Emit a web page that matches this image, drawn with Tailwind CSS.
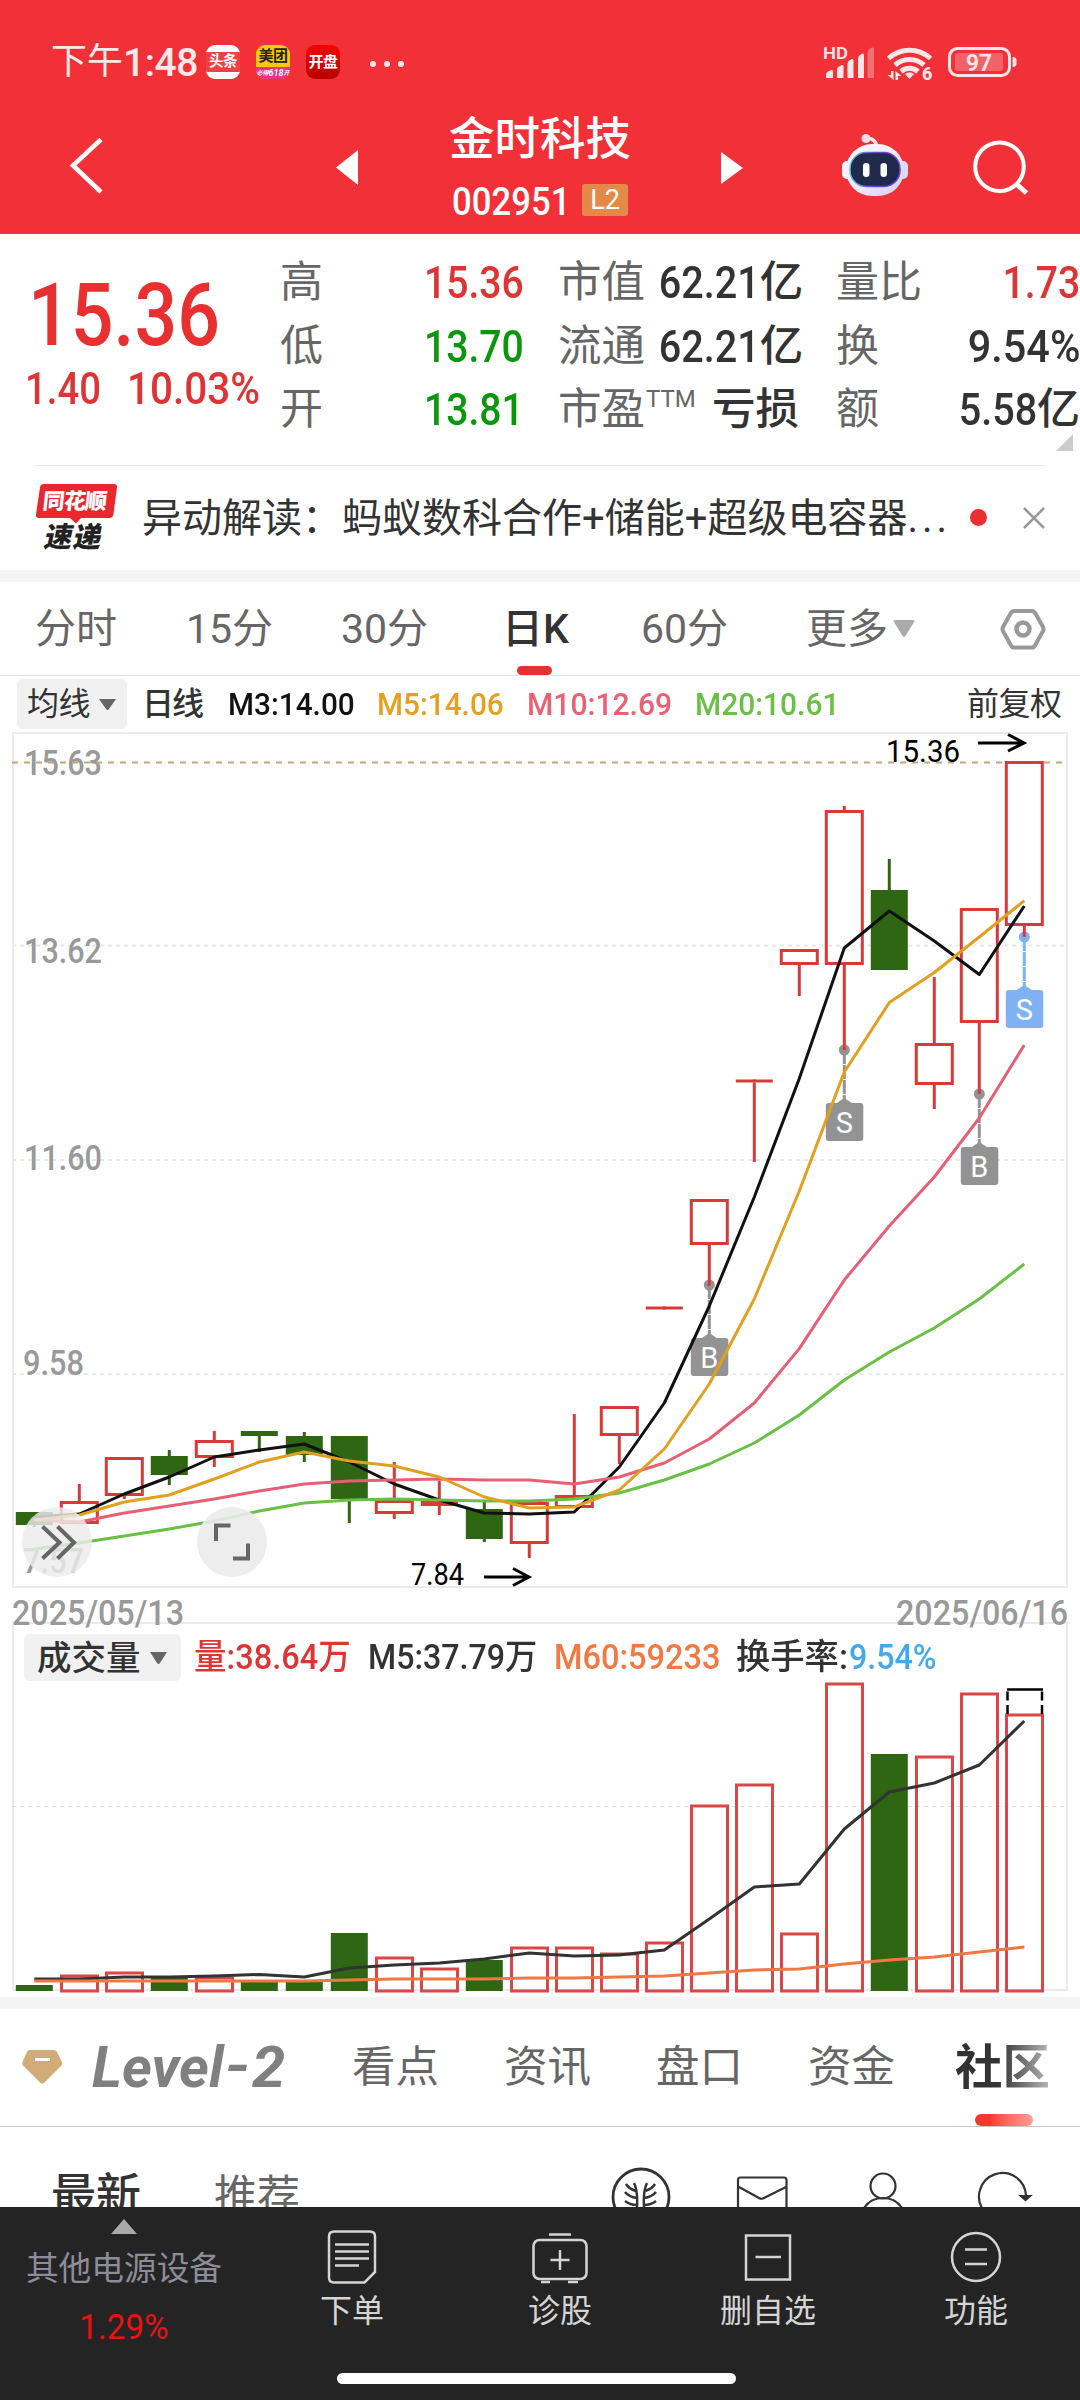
<!DOCTYPE html>
<html lang="zh-CN">
<head>
<meta charset="utf-8">
<title>金时科技 002951</title>
<script src="https://cdn.jsdelivr.net/npm/@tailwindcss/browser@4"></script>
</head>
<body class="w-[1080px] h-[2400px] overflow-hidden bg-white font-['Roboto','Noto_Sans_CJK_SC',sans-serif] text-[#333] whitespace-nowrap">

<!-- Header -->
<header class="h-[234px] bg-[#f23038] text-white flex flex-col">
  <div class="h-[124px] pt-[42px] pl-[51px] flex items-start">
    <div class="w-[155px] h-[40px] flex items-center text-white/90"><span class="text-[36px] leading-[40px]">下午</span><span class="text-[39px] leading-[40px] font-medium tracking-[-0.5px] translate-y-[1px]">1:48</span></div>
    <div class="mt-[3px] w-[34px] h-[34px] rounded-[9px] bg-white overflow-hidden flex items-center"><div class="w-full h-[20px] bg-[#f04142] text-[14.500px] leading-[19px] font-bold text-center tracking-[-0.5px]">头条</div></div>
    <div class="mt-[3px] ml-[16px] w-[34px] h-[34px] rounded-[9px] bg-[#fdca0a] overflow-hidden text-center flex flex-col"><div class="h-[22px] pt-[3px] text-[15px] leading-[17px] font-bold text-[#222] tracking-[-0.5px]">美团</div><div class="h-[12px] bg-[#f0308c] text-[6px] leading-[12px] font-bold italic flex justify-center items-center"><span>必得</span><span class="text-[9px]">618</span><span>开</span></div></div>
    <div class="mt-[3px] ml-[16px] w-[34px] h-[34px] rounded-[9px] bg-linear-to-b from-[#f80000] to-[#b80000] text-[15px] leading-[34px] font-bold text-center tracking-[-0.5px]">开盘</div>
    <div class="ml-[30px] mt-[19px] flex gap-[8px]"><i class="size-[6px] rounded-full bg-white/90"></i><i class="size-[6px] rounded-full bg-white/90"></i><i class="size-[6px] rounded-full bg-white/90"></i></div>
    <svg class="ml-[419px] -mt-[2px] w-[200px] h-[44px] shrink-0" viewBox="823 40 200 44" fill="#fde6e7">
      <text x="823" y="58.500" font-size="16.500" font-weight="600" textLength="25" lengthAdjust="spacingAndGlyphs">HD</text>
      <path d="M826 78v-3q0-3 3-4l2-.8q2-.5 2 1.500V78zM837 78V70q0-3 3-4l2-1q1.500-.5 1.500 1.500V78zM847.500 78V64q0-3 2.500-4l2-1q1.500-.5 1.500 1.500V78zM858 78V59q0-3 2.500-4.500l2-1q1.500-.5 1.500 1.500V78z"/>
      <path opacity=".35" d="M867.500 78V53q0-3 2.500-4.500l2-1q2-.5 2 1.500V78z"/>
      <g fill="none" stroke="#fde6e7" stroke-width="5"><path d="M888.500 58.500a31 31 0 0 1 42 0"/><path d="M895 65a22 22 0 0 1 29 0"/><path d="M901 71.500a13 13 0 0 1 17 0"/></g>
      <path d="M905 74q4.500-3.500 9 0l-4.500 5z"/>
      <path d="M891 71h2.500v9l-6-5h3.500zM895.500 80v-9l6 5h-3.500v4z"/>
      <text x="922" y="80" font-size="18" font-weight="800">6</text>
      <rect x="949.500" y="48.500" width="60" height="27" rx="8" fill="none" stroke="#fde6e7" stroke-width="3"/>
      <rect x="955" y="53" width="48" height="18" rx="3" opacity=".28"/>
      <path d="M1012.500 57q4 0 4 3v4q0 3-4 3z"/>
      <text x="966" y="71" font-size="24" font-weight="600" textLength="26" lengthAdjust="spacingAndGlyphs">97</text>
    </svg>
  </div>
  <div class="h-[110px] flex items-start">
    <svg class="w-[450px] h-[80px]" viewBox="0 124 450 80"><path d="M101 139.500 73 165.500 101 192" fill="none" stroke="#fff" stroke-width="4.500"/><path d="M336 167.500 358 150v35z" fill="#fff"/></svg>
    <div class="w-[180px] -mt-[11px] flex flex-col items-center">
      <h1 class="text-[45.500px] leading-[54px] font-medium">金时科技</h1>
      <div class="mt-[16px] h-[34px] w-[180px] pl-[2px] flex items-center"><span class="w-[130px] text-[39px] leading-[34px] font-medium inline-block origin-left scale-x-[.89] translate-y-[2px]">002951</span><span class="w-[46px] h-[32px] bg-[#e48a49] rounded-[3px] text-[27px] leading-[33px] text-center">L2</span></div>
    </div>
    <svg class="w-[450px] h-[80px]" viewBox="630 124 450 80">
      <defs><linearGradient id="shell" x1="0" y1="0" x2="1" y2="1"><stop offset="0" stop-color="#fff"/><stop offset=".6" stop-color="#e9e6fb"/><stop offset="1" stop-color="#cdd0f5"/></linearGradient><linearGradient id="rim" x1="0" x2="1"><stop offset="0" stop-color="#62c6d8"/><stop offset=".5" stop-color="#6a3fd0"/><stop offset="1" stop-color="#7a40d8"/></linearGradient></defs>
      <path d="M743 168 721 152v32z" fill="#fff"/>
      <path d="M866 138.500q9-1 10.500 7" fill="none" stroke="#f6e4ee" stroke-width="3.500"/><circle cx="866" cy="138.500" r="4.500" fill="#f6dfea"/>
      <rect x="842" y="161" width="14" height="18" rx="5" fill="#f4f3ff"/><rect x="894" y="161" width="14" height="18" rx="5" fill="#d9dcfa"/>
      <rect x="846" y="144" width="58" height="52" rx="26" fill="url(#shell)"/>
      <rect x="850" y="152.500" width="50" height="34" rx="16" fill="#1f2a4c" stroke="url(#rim)" stroke-width="1.500"/>
      <rect x="863" y="163" width="6.500" height="14" rx="3.200" fill="#fff"/><rect x="880.500" y="163" width="6.500" height="14" rx="3.200" fill="#fff"/>
      <circle cx="999.500" cy="166.700" r="24.300" fill="none" stroke="#fff" stroke-width="4"/><path d="M1017 184.500 1026.500 193" stroke="#fff" stroke-width="5"/>
    </svg>
  </div>
</header>

<!-- Quote -->
<section class="relative h-[231px] flex">
  <div class="w-[280px] text-[#e83030] font-medium">
    <div class="mt-[41px] pl-[28px] h-[80px]"><span class="inline-block origin-left scale-x-[.865] text-[87px] leading-[80px]">15.36</span></div>
    <div class="mt-[9px] pl-[25px] flex h-[50px] text-[44px] leading-[50px] text-[#dd3535]"><span class="w-[102px] origin-left scale-x-[.87]">1.40</span><span class="w-[140px] origin-left scale-x-[.92]">10.03%</span></div>
  </div>
  <div class="w-[244px] pt-[17px] text-[43px] leading-[63.500px] text-[#666]">
    <div class="flex justify-between"><span>高</span><span class="text-[45px] font-medium text-[#dd3535] origin-right scale-x-[.87]">15.36</span></div>
    <div class="flex justify-between"><span>低</span><span class="text-[45px] font-medium text-[#0b960b] origin-right scale-x-[.87]">13.70</span></div>
    <div class="flex justify-between"><span>开</span><span class="text-[45px] font-medium text-[#0b960b] origin-right scale-x-[.87]">13.81</span></div>
  </div>
  <div class="w-[241px] ml-[34px] pt-[17px] text-[43.500px] leading-[63.500px] text-[#666]">
    <div class="flex justify-between"><span>市值</span><span class="flex font-medium text-[#333]"><span class="text-[45px] origin-right scale-x-[.88]">62.21</span>亿</span></div>
    <div class="flex justify-between"><span>流通</span><span class="flex font-medium text-[#333]"><span class="text-[45px] origin-right scale-x-[.88]">62.21</span>亿</span></div>
    <div class="flex justify-between"><span class="flex">市盈<span class="text-[24px] leading-[42px] ml-[1px]">TTM</span></span><span class="font-medium text-[#333]">亏损</span></div>
  </div>
  <div class="w-[244px] ml-[37px] pt-[17px] text-[43px] leading-[63.500px] text-[#666]">
    <div class="flex justify-between"><span>量比</span><span class="text-[45px] font-medium text-[#dd3535] origin-right scale-x-[.87]">1.73</span></div>
    <div class="flex justify-between"><span>换</span><span class="text-[45px] font-medium text-[#333] origin-right scale-x-[.92]">9.54%</span></div>
    <div class="flex justify-between"><span>额</span><span class="flex font-medium text-[#333]"><span class="text-[45px] origin-right scale-x-[.88]">5.58</span>亿</span></div>
  </div>
  <svg class="absolute left-[1056px] top-[200px] w-[17px] h-[17px]" viewBox="0 0 17 17"><path d="M17 0v17H0z" fill="#ccc"/></svg>
</section>

<!-- News strip -->
<section class="h-[105px] mx-[35px] border-t border-[#e8e8e8] flex items-start">
  <div class="relative w-[84px] h-[70px] mt-[18px]">
    <svg class="absolute inset-0 w-[84px] h-[70px]" viewBox="35 484 84 70"><path d="M43.500 484H114q3.500 0 3 3.500L113.500 514q-.5 4-4.500 4H81l-5 5.500-6-5.500H39q-3.500 0-3-3.500L40 487.500q.5-3.500 3.500-3.500z" fill="#e8282e"/></svg>
    <div class="relative pl-[8px] pt-[5px] text-[22px] leading-[25px] font-black text-white -skew-x-6 tracking-[-0.800px]">同花顺</div>
    <div class="relative pl-[10px] mt-[9px] text-[28px] leading-[30px] font-black text-[#222] -skew-x-12 tracking-[1px]">速递</div>
  </div>
  <div class="w-[807px] ml-[23px] mt-[25px] text-[40px] leading-[56px]">异动解读：蚂蚁数科合作+储能+超级电容器<span class="tracking-[4px]">...</span></div>
  <i class="ml-[21px] mt-[43px] size-[17px] rounded-full bg-[#e83030]"></i>
  <svg class="ml-[36px] mt-[41px] w-[22px] h-[22px]" viewBox="0 0 22 22"><path d="M1 1 21 21M21 1 1 21" stroke="#999" stroke-width="2.500"/></svg>
</section>
<div class="h-[12px] bg-[#f4f4f4]"></div>

<!-- Period tabs -->
<nav class="h-[94px] border-b border-[#e2e2e2] pl-[35px] flex text-[41px] leading-[94px] text-[#666]">
  <span class="w-[151px]">分时</span><span class="w-[155px]">15分</span><span class="w-[161px]">30分</span>
  <span class="w-[139px] h-[93px] relative font-medium text-[#333]">日K<i class="absolute left-[15px] bottom-0 w-[35px] h-[9px] rounded-full bg-[#e83030]"></i></span>
  <span class="w-[165px]">60分</span><span class="w-[84px]">更多</span>
  <svg class="mt-[18px] w-[160px] h-[60px]" viewBox="890 600 160 60"><path d="M895.500 620h17q3 0 1.200 2.500L905.500 636q-1.500 2-3 0L894.300 622.500Q892.500 620 895.500 620z" fill="#aaa"/><g fill="none" stroke="#999"><path d="M1014 611h18q2 0 3 1.800L1043 627q1 2 0 4l-8 14.500q-1 2-3 2h-18q-2 0-3-2L1003 631q-1-2 0-4l8-14.200q1-1.800 3-1.800z" stroke-width="4"/><circle cx="1023" cy="629" r="6.500" stroke-width="4.500"/></g></svg>
</nav>

<!-- Moving averages legend -->
<div class="h-[54px] pl-[17px] pt-[3px] flex text-[32px] leading-[50px] font-medium">
  <div class="w-[110px] h-[50px] rounded-[6px] bg-[#f1f1f1] pl-[10px] flex items-center font-normal tracking-[-0.500px]">均线<svg class="ml-[9px] w-[17px] h-[11px]" viewBox="0 0 17 11"><path d="M0 0h17L10 10q-1.500 2-3 0z" fill="#666"/></svg></div>
  <span class="w-[86px] ml-[15px] tracking-[-2px]">日线</span>
  <span class="w-[149px] text-[#111] origin-left scale-x-[.93]">M3:14.00</span>
  <span class="w-[150px] text-[#e5a020] origin-left scale-x-[.93]">M5:14.06</span>
  <span class="w-[168px] text-[#ec6075] origin-left scale-x-[.94]">M10:12.69</span>
  <span class="w-[272px] text-[#6abf45] origin-left scale-x-[.935]">M20:10.61</span>
  <span class="font-normal tracking-[-0.500px]">前复权</span>
</div>

<!-- Candlestick chart -->
<svg class="block w-[1080px] h-[860px] overflow-visible" viewBox="0 730 1080 860">
  <rect x="13" y="733" width="1054" height="854" fill="none" stroke="#ebebeb" stroke-width="2"/>
  <g stroke="#e9e9e9" stroke-width="2" stroke-dasharray="4 4"><path d="M12 945.500H1066M12 1160H1066M12 1374H1066"/></g>
  <g font-size="35" font-weight="500" fill="#999">
    <text x="24" y="774.500" textLength="78" lengthAdjust="spacingAndGlyphs">15.63</text>
    <text x="24" y="963" textLength="78" lengthAdjust="spacingAndGlyphs">13.62</text>
    <text x="24" y="1169.500" textLength="78" lengthAdjust="spacingAndGlyphs">11.60</text>
    <text x="23" y="1374.500" textLength="61" lengthAdjust="spacingAndGlyphs">9.58</text>
    <text x="23" y="1572.500" textLength="61" lengthAdjust="spacingAndGlyphs">7.57</text>
  </g>
  <path d="M12 762.500H1066" stroke="#c8a676" stroke-width="2" stroke-dasharray="6 6"/>
  <g id="tags"></g>
  <g id="candles"></g>
  <g id="lines" fill="none" stroke-width="3" stroke-linejoin="round"></g>
  <g font-size="30.500" fill="#000"><text x="886" y="762" textLength="74" lengthAdjust="spacingAndGlyphs">15.36</text><text x="411" y="1585" textLength="53" lengthAdjust="spacingAndGlyphs">7.84</text></g>
  <path d="M978 743h45M1008 734.500 1024 743 1008 751M484 1577h44M513 1568.500 529 1577 513 1585.500" fill="none" stroke="#000" stroke-width="3"/>
  <g fill="#ebebeb" fill-opacity=".82"><circle cx="57" cy="1542" r="35"/><circle cx="232" cy="1542" r="35" fill-opacity=".9"/></g>
  <path d="M42.500 1526.500 59.500 1542.500 42.500 1558.500M57.500 1526.500 74 1542.500 57.500 1558.500M216 1541V1525.500H230.500M248 1543.500V1558.500H233" fill="none" stroke="#666" stroke-width="4"/>
</svg>

<!-- Volume chart -->
<section class="relative h-[407px]">
  <svg class="block w-[1080px] h-[407px] overflow-visible" viewBox="0 1590 1080 407">
    <path d="M13 1990V1623H1067V1990z" fill="none" stroke="#ebebeb" stroke-width="2"/>
    <g font-size="35" font-weight="500" fill="#999"><text x="12" y="1625" textLength="172" lengthAdjust="spacingAndGlyphs">2025/05/13</text><text x="896" y="1625" textLength="172" lengthAdjust="spacingAndGlyphs">2025/06/16</text></g>
    <path d="M12 1806.500H1066" stroke="#ddd" stroke-width="1" stroke-dasharray="4 4"/>
    <g id="volumes"></g>
    <path d="M1007 1689.500h36M1007.500 1691.500v9M1007.500 1705v9M1042 1691.500v9M1042 1705v9" stroke="#000" stroke-width="2.500"/>
    <g id="vlines" fill="none" stroke-width="3" stroke-linejoin="round"></g>
  </svg>
  <div class="absolute left-[24px] top-[44px] flex text-[35px] leading-[48px] font-medium">
    <div class="w-[157px] h-[47px] rounded-[6px] bg-[#f1f1f1] pl-[13px] flex items-center text-[34.500px]">成交量<svg class="ml-[9px] w-[17px] h-[12px]" viewBox="0 0 17 12"><path d="M0 0h17L10 11q-1.500 2-3 0z" fill="#666"/></svg></div>
    <span class="w-[174px] ml-[13px] text-[#dd3535] origin-left scale-x-[.93]">量:38.64万</span>
    <span class="w-[186px] origin-left scale-x-[.92]">M5:37.79万</span>
    <span class="w-[182px] text-[#f37943] origin-left scale-x-[.93]">M60:59233</span>
    <span class="w-[113px] origin-left scale-x-[.98]">换手率:</span><span class="text-[#43a9e8] origin-left scale-x-[.92]">9.54%</span>
  </div>
</section>
<div class="h-[12px] bg-[#f4f4f4]"></div>

<!-- Content tabs -->
<nav class="h-[118px] border-b border-[#c8c8c8] flex items-start text-[43.500px] leading-[118px] text-[#666]">
  <svg class="ml-[20px] mt-[38px] w-[44px] h-[40px]" viewBox="20 2047 44 40"><path d="M30 2050H54q2 0 3 2L62 2062q.8 2-.5 3.500L44 2083q-1.800 1.500-3.500 0L23 2065.500q-1.300-1.500-.5-3.500L27 2052q1-2 3-2z" fill="#cfac78"/><path d="M35 2059.500H50" stroke="#fff" stroke-width="3"/></svg>
  <span class="ml-[28px] w-[260px] flex text-[57px] font-bold italic text-[#808080]"><span>Level</span><span class="w-[27px] ml-[1px] origin-left scale-x-[1.15] -translate-y-[2px]">-</span><span class="origin-left scale-x-[1.05]">2</span></span>
  <span class="w-[152px]">看点</span><span class="w-[152px]">资讯</span><span class="w-[152px]">盘口</span><span class="w-[147px]">资金</span>
  <span class="relative h-[117px] text-[47.500px] font-bold bg-linear-to-r from-[#333] from-45% to-[#bbb] bg-clip-text text-transparent">社区<i class="absolute left-[20px] bottom-0 w-[58px] h-[12px] rounded-full bg-linear-to-r from-[#f8382f] from-25% to-[#ff9c98]"></i></span>
</nav>

<!-- Community sub tabs -->
<section class="h-[80px] overflow-hidden flex pl-[51px] text-[#666]">
  <span class="w-[163px] mt-[39px] text-[45px] leading-[60px] font-medium text-[#333]">最新</span>
  <span class="w-[386px] mt-[39px] text-[43px] leading-[60px]">推荐</span>
  <svg class="w-[480px] h-[80px]" viewBox="600 2127 480 80" fill="none" stroke="#333" stroke-width="2.200">
    <circle cx="641" cy="2197" r="28" stroke-width="2.800"/>
    <path stroke-width="2.500" d="M634 2183q4 8 3 24M626 2184q3 5 10 7M625 2192q4 5 12 6M625 2201q5 4 12 4M647 2183q-4 8-3 24M655 2184q-3 5-10 7M656 2192q-4 5-12 6M656 2201q-5 4-12 4"/>
    <path d="M738 2210V2180q0-2.500 2.500-2.500H784q2.500 0 2.500 2.500V2210M739 2187 759 2198q2.500 1.500 5 0L786 2187"/>
    <circle cx="883" cy="2186" r="12.500"/><path d="M863 2210q6-12 20-12t20 12"/>
    <path d="M984 2211A23.500 23.500 0 1 1 1026 2196"/><path d="M1021 2196h9l-4.500 4z" fill="#333"/>
  </svg>
</section>

<!-- Bottom bar -->
<footer class="relative h-[193px] bg-[#242424] text-[#d4d4d4] grid grid-cols-[248px_208px_208px_208px_208px] text-[32px] leading-[40px] text-center content-start">
  <div class="flex flex-col items-center"><svg class="mt-[12px] w-[26px] h-[15px]" viewBox="0 0 26 15"><path d="M13 0 26 15H0z" fill="#aaa"/></svg><span class="mt-[15px] text-[32.700px] text-[#8d8d99]">其他电源设备</span><span class="mt-[18px] text-[35px] text-[#e81212] scale-x-[.95] translate-y-[1px]">1.29%</span></div>
  <div class="flex flex-col items-center"><svg class="mt-[20px] w-[60px] h-[60px]" viewBox="322 2227 60 60" fill="none" stroke="#d4d4d4" stroke-width="2.500"><path d="M334 2231.500H370q5 0 5 5V2272L364.500 2282.500H334q-5 0-5-5V2236.500q0-5 5-5z"/><path d="M335 2244.500H369M335 2251.500H369M335 2258.500H369M335 2265.500H359"/></svg><span class="mt-[4px]">下单</span></div>
  <div class="flex flex-col items-center"><svg class="mt-[20px] w-[60px] h-[60px]" viewBox="530 2227 60 60" fill="none" stroke="#d4d4d4" stroke-width="2.500"><rect x="533.500" y="2240" width="53" height="39" rx="6"/><path d="M549 2234.500H571M560 2250V2270M550.500 2260H569.500M541 2282H550M568 2282H578"/></svg><span class="mt-[4px]">诊股</span></div>
  <div class="flex flex-col items-center"><svg class="mt-[20px] w-[60px] h-[60px]" viewBox="738 2227 60 60" fill="none" stroke="#d4d4d4" stroke-width="2.500"><rect x="746" y="2235.500" width="44" height="44"/><path d="M755.500 2257H781"/></svg><span class="mt-[4px]">删自选</span></div>
  <div class="flex flex-col items-center"><svg class="mt-[20px] w-[60px] h-[60px]" viewBox="946 2227 60 60" fill="none" stroke="#d4d4d4" stroke-width="2.500"><circle cx="976" cy="2257" r="24"/><path d="M965 2249.500H987M965 2264H987"/></svg><span class="mt-[4px]">功能</span></div>
  <i class="absolute left-[337px] top-[166px] w-[399px] h-[11px] rounded-full bg-white"></i>
</footer>

<script>
const X = i => 34.3 + 45 * i;
const RED = '#d83a3a', GREEN = '#2f6613';
const html = (id, s) => document.getElementById(id).innerHTML = s;
// [direction, high, body top, body bottom, low] in chart units
const candles = [
 ['g',1512,1512,1525,1527],['r',1484,1501,1524,1524],['r',1457,1457,1496,1499],['g',1450,1456,1475,1485],['r',1431,1440,1458,1467],
 ['g',1431,1431,1436,1452],['g',1432,1436,1455,1462],['g',1436,1436,1499,1523],['r',1462,1500,1514,1519],['r',1481,1501,1506,1515],
 ['g',1501,1509,1539,1542],['r',1502,1502,1544,1558],['r',1414,1495,1508,1508],['r',1406,1406,1436,1464],['r',1308,1306.5,1309.5,1308],
 ['r',1199,1199,1245,1286],['r',1081,1079.5,1082.5,1162],['r',949,949,965,996],['r',806,810,965,1050],['g',859,890,970,970],
 ['r',977,1043,1085,1109],['r',908,908,1023,1094],['r',761,761,926,937]];
html('candles', candles.map(([d,h,t,b,l],i) => {
  const c = X(i), col = d === 'g' ? GREEN : RED;
  const wick = `<path d="M${c} ${h}V${t}M${c} ${b}V${l}" stroke="${col}" stroke-width="3"/>`;
  return wick + (d === 'g' || b - t < 6
    ? `<rect x="${c-18.5}" y="${t}" width="37" height="${b-t}" fill="${col}"/>`
    : `<rect x="${c-18}" y="${t+1.5}" width="36" height="${b-t-3}" fill="none" stroke="${col}" stroke-width="3"/>`);
}).join(''));
const line = (ys, col) => `<polyline stroke="${col}" points="${ys.map((y,i) => X(i)+','+y).join(' ')}"/>`;
html('lines',
 line([1517,1514,1494,1477,1457,1450,1444,1462,1484,1500,1513,1514,1512,1467,1403,1306,1197,1078.5,948,911,941,974.5,906],'#111') +
 line([1549,1543,1536,1529,1521,1511,1503,1500,1499,1500,1501,1501,1499,1493,1480,1464,1443,1415,1380,1352,1328,1299,1264],'#6abf45') +
 line([1520,1522,1513,1506,1499,1491,1484,1481,1480,1479,1480,1480,1484,1477,1463,1439,1403,1348.6,1280,1226,1177,1118,1045],'#e56074') +
 line([1520,1515,1502,1495,1479,1462,1452,1461,1466,1477,1497,1508,1507,1490,1449,1384,1299,1191,1072,1002.6,972.5,937,900.6],'#e0a020'));
html('tags', [[15,1285,'B','#939393'],[18,1050,'S','#939393'],[21,1094,'B','#939393'],[22,937,'S','#7fb2f2']].map(([i,y,s,col]) => {
  const c = X(i);
  return `<circle cx="${c}" cy="${y}" r="5.5" fill="${col}"/><path d="M${c} ${y}v50" stroke="${col}" stroke-width="3" stroke-dasharray="14 1"/>
  <path d="M${c} ${y+48}l9 6h-18z" fill="${col}"/><rect x="${c-18.5}" y="${y+53}" width="37.500" height="38" rx="3" fill="${col}"/>
  <text x="${c}" y="${y+82.5}" font-size="29" fill="#fff" text-anchor="middle">${s}</text>`;
}).join(''));
const vols = [['g',1985],['r',1975],['r',1972],['g',1978],['r',1977],['g',1982],['g',1981],['g',1933],['r',1957],['r',1968],['g',1960],['r',1947],['r',1947],['r',1953],['r',1942],['r',1805],['r',1784],['r',1933],['r',1683],['g',1754],['r',1756],['r',1693],['r',1714]];
html('volumes', vols.map(([d,t],i) => d === 'g'
  ? `<rect x="${X(i)-18.5}" y="${t}" width="37" height="${1991-t}" fill="${GREEN}"/>`
  : `<rect x="${X(i)-17.8}" y="${t+1}" width="36" height="${1990-t}" fill="none" stroke="#db4646" stroke-width="3"/>`).join(''));
html('vlines',
 line([1979,1979,1977,1977,1976,1974.5,1977,1968,1965,1963,1959,1953,1956,1955,1950,1919,1887,1884,1829,1792,1783,1765,1721],'#333') +
 line([1981,1981,1981,1981,1981,1981,1981,1980,1979,1979,1979,1978,1978,1977,1976,1973,1970,1969,1964,1960,1957,1952,1947],'#f07843'));
</script>
</body>
</html>
